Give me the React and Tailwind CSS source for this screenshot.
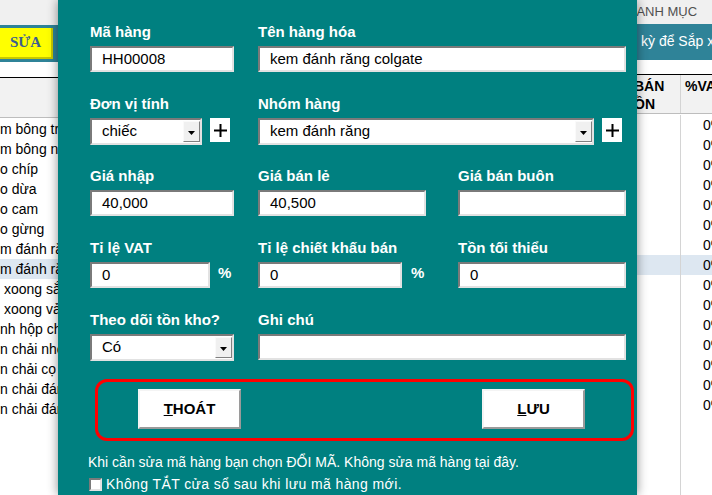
import React from "react";

const F = "font-['Liberation_Sans',Arial,sans-serif]";

function Arrow() {
  return (
    <svg width="7" height="4" viewBox="0 0 7 4">
      <polygon points="0,0 7,0 3.5,4" fill="#000" />
    </svg>
  );
}

function Input({ w, value }) {
  return (
    <div
      className={`${w} h-[26px] bg-white border-2 border-t-[#7a7a7a] border-l-[#7a7a7a] border-b-[#e2e2e2] border-r-[#e2e2e2] flex items-center pl-[10px] text-[15px] text-black whitespace-nowrap overflow-hidden`}
    >
      {value}
    </div>
  );
}

function Select({ w, value }) {
  return (
    <div
      className={`${w} h-[27px] bg-white border-2 border-t-[#7a7a7a] border-l-[#7a7a7a] border-b-[#e2e2e2] border-r-[#e2e2e2] flex items-center pl-[10px] text-[15px] text-black whitespace-nowrap`}
    >
      <span className="flex-1">{value}</span>
      <div className="w-[17px] h-[21px] bg-[#f0f0f0] border border-t-[#fafafa] border-l-[#fafafa] border-b-[#808080] border-r-[#808080] flex items-center justify-center pt-[2px]">
        <Arrow />
      </div>
    </div>
  );
}

function Plus() {
  return (
    <div className="w-[20px] h-[24px] bg-white flex items-center justify-center">
      <svg width="13" height="13" viewBox="0 0 13 13">
        <rect x="5.5" y="0" width="2" height="13" fill="#000" />
        <rect x="0" y="5.5" width="13" height="2" fill="#000" />
      </svg>
    </div>
  );
}

function Label({ children, w }) {
  return (
    <div className={`${w} h-[20px] leading-[20px] mb-[4px] text-white font-bold text-[15px] whitespace-nowrap`}>
      {children}
    </div>
  );
}

const leftRows = [
  "m bông trang điểm",
  "m bông ngoáy tai",
  "o chíp",
  "o dừa",
  "o cam",
  "o gừng",
  "m đánh răng",
  "m đánh răng",
  " xoong sắt",
  " xoong vải",
  "nh hộp chữ",
  "n chải nhỏ",
  "n chải cọ",
  "n chải đánh",
  "n chải đánh",
];

export default function App() {
  return (
    <div className={`${F} w-[712px] h-[495px] overflow-hidden flex bg-white`}>
      {/* Left sheet strip */}
      <div className="w-[58px] shrink-0 flex flex-col overflow-hidden">
        <div className="h-[25px] bg-[#f0f0f0]" />
        <div className="h-[37px] bg-[#2f8398] flex items-center">
          <div className="w-[53px] h-[31px] shrink-0 bg-[#ffff00] border-b-2 border-r-2 border-[#c8c800] flex items-center justify-center font-['Liberation_Serif',serif] font-bold text-[15px] text-[#3d5f91]">
            SỬA
          </div>
        </div>
        <div className="h-[16px] bg-white border-b border-black" />
        <div className="h-[40px] bg-[#f2f2f2] border-b border-[#bdbdbd]" />
        <div className="flex flex-col pt-[1px]">
          {leftRows.map((t, i) => (
            <div
              key={i}
              className={`h-[20px] leading-[20px] text-[14px] text-black whitespace-pre overflow-hidden ${i === 7 ? "bg-[#dde7f1]" : "bg-white"}`}
            >
              {t}
            </div>
          ))}
        </div>
      </div>

      {/* Dialog */}
      <div className="relative z-10 w-[579px] shrink-0 bg-[#008080] shadow-[0_0_10px_rgba(0,0,0,0.45)] pl-[32px] pt-[22px] flex flex-col">
        {/* row 1 */}
        <div className="flex gap-[24px]">
          <div>
            <Label w="w-[144px]">Mã hàng</Label>
            <Input w="w-[144px]" value="HH00008" />
          </div>
          <div>
            <Label w="w-[368px]">Tên hàng hóa</Label>
            <Input w="w-[368px]" value="kem đánh răng colgate" />
          </div>
        </div>
        {/* row 2 */}
        <div className="flex gap-[24px] mt-[22px]">
          <div>
            <Label w="w-[144px]">Đơn vị tính</Label>
            <div className="flex gap-[8px]">
              <Select w="w-[112px]" value="chiếc" />
              <Plus />
            </div>
          </div>
          <div>
            <Label w="w-[368px]">Nhóm hàng</Label>
            <div className="flex gap-[8px]">
              <Select w="w-[336px]" value="kem đánh răng" />
              <Plus />
            </div>
          </div>
        </div>
        {/* row 3 */}
        <div className="flex mt-[21px]">
          <div className="mr-[24px]">
            <Label w="w-[144px]">Giá nhập</Label>
            <Input w="w-[144px]" value="40,000" />
          </div>
          <div className="mr-[32px]">
            <Label w="w-[168px]">Giá bán lẻ</Label>
            <Input w="w-[168px]" value="40,500" />
          </div>
          <div>
            <Label w="w-[168px]">Giá bán buôn</Label>
            <Input w="w-[168px]" value="" />
          </div>
        </div>
        {/* row 4 */}
        <div className="flex mt-[22px]">
          <div className="mr-[24px] w-[144px]">
            <Label w="w-[144px]">Tỉ lệ VAT</Label>
            <div className="flex items-start">
              <Input w="w-[120px]" value="0" />
              <span className="ml-[8px] mt-[1px] text-white font-bold text-[15px] leading-[20px]">%</span>
            </div>
          </div>
          <div className="mr-[32px] w-[168px]">
            <Label w="w-[168px]">Tỉ lệ chiết khấu bán</Label>
            <div className="flex items-start">
              <Input w="w-[144px]" value="0" />
              <span className="ml-[9px] mt-[1px] text-white font-bold text-[15px] leading-[20px]">%</span>
            </div>
          </div>
          <div>
            <Label w="w-[168px]">Tồn tối thiểu</Label>
            <Input w="w-[168px]" value="0" />
          </div>
        </div>
        {/* row 5 */}
        <div className="flex gap-[24px] mt-[22px]">
          <div>
            <Label w="w-[144px]">Theo dõi tồn kho?</Label>
            <Select w="w-[144px]" value="Có" />
          </div>
          <div>
            <Label w="w-[368px]">Ghi chú</Label>
            <Input w="w-[368px]" value="" />
          </div>
        </div>
        {/* buttons */}
        <div className="ml-[5px] mt-[18px] w-[539px] h-[64px] border-[3px] border-[#ff0000] rounded-[12px] flex items-start justify-between pt-[7px] pl-[40px] pr-[46px]">
          <div className="w-[103px] h-[40px] bg-white border-2 border-t-[#f4f4f4] border-l-[#f4f4f4] border-b-[#9a9a9a] border-r-[#9a9a9a] flex items-center justify-center font-bold text-[15px] text-black">
            <span><span className="underline">T</span>HOÁT</span>
          </div>
          <div className="w-[103px] h-[40px] bg-white border-2 border-t-[#f4f4f4] border-l-[#f4f4f4] border-b-[#9a9a9a] border-r-[#9a9a9a] flex items-center justify-center font-bold text-[15px] text-black">
            <span><span className="underline">L</span>ƯU</span>
          </div>
        </div>
        {/* notes */}
        <div className="mt-[10px] -ml-[2px] text-white text-[14px] leading-[22px] whitespace-nowrap">
          Khi cần sửa mã hàng bạn chọn ĐỔI MÃ. Không sửa mã hàng tại đây.
        </div>
        <div className="-ml-[1px] flex items-center text-white text-[14px] leading-[22px] whitespace-nowrap tracking-[0.4px]">
          <span className="w-[13px] h-[13px] shrink-0 bg-white border-2 border-t-[#7a7a7a] border-l-[#7a7a7a] border-b-[#e2e2e2] border-r-[#e2e2e2] mr-[4px]" />
          Không TẮT cửa sổ sau khi lưu mã hàng mới.
        </div>
      </div>

      {/* Right sheet strip */}
      <div className="flex-1 min-w-0 flex flex-col overflow-hidden">
        <div className="h-[25px] bg-[#f0f0f0] flex items-center text-[13px] text-[#505050] whitespace-nowrap">
          <span className="-ml-[10px]">DANH MỤC</span>
        </div>
        <div className="h-[37px] bg-[#2f8398] flex items-center text-[14px] text-white whitespace-nowrap">
          <span className="ml-[4px]">kỳ để Sắp xếp</span>
        </div>
        <div className="h-[16px] bg-white border-b border-black" />
        <div className="h-[40px] bg-[#f2f2f2] border-b border-[#bdbdbd] flex text-[14px] font-bold text-black">
          <div className="w-[44px] shrink-0 border-r border-[#d4d4d4] leading-[18px] pt-[2px] whitespace-nowrap">
            <div className="-ml-[3px]">BÁN</div>
            <div className="-ml-[3px]">ỒN</div>
          </div>
          <div className="shrink-0 pl-[4px] pt-[2px] leading-[18px] whitespace-nowrap">%VAT</div>
        </div>
        <div className="flex flex-col pt-[1px]">
          {leftRows.map((_, i) => (
            <div key={i} className={`h-[20px] flex text-[14px] leading-[20px] ${i === 7 ? "bg-[#dde7f1]" : "bg-white"}`}>
              <div className="w-[44px] shrink-0 border-r border-[#d4d4d4]" />
              <div className="shrink-0 pl-[22px] whitespace-nowrap">0%</div>
            </div>
          ))}
          <div className="flex h-[80px]">
            <div className="w-[44px] shrink-0 border-r border-[#d4d4d4]" />
          </div>
        </div>
      </div>
    </div>
  );
}
